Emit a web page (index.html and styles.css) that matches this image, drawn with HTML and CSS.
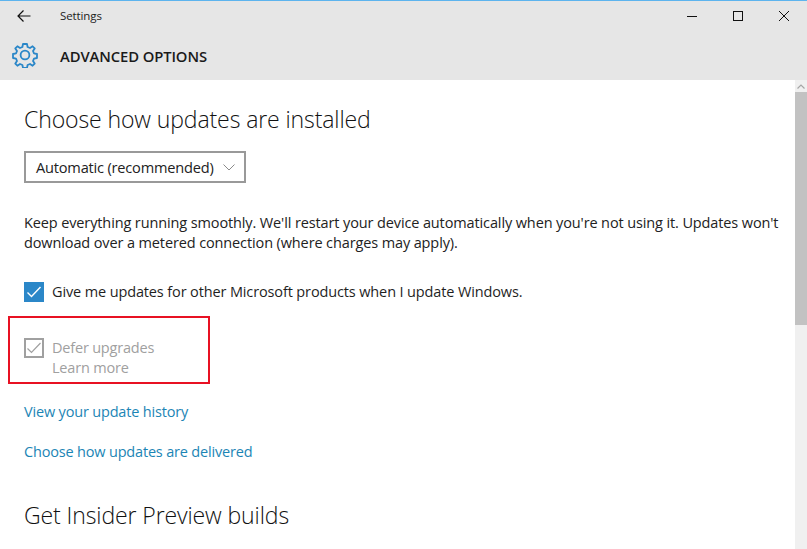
FILE: index.html
```html
<!DOCTYPE html>
<html lang="en">
<head>
<meta charset="utf-8">
<title>Settings</title>
<link rel="stylesheet" href="styles.css">
</head>
<body>
<div class="window">
  <header class="chrome">
    <div class="titlebar">
      <svg class="back" width="16" height="14" viewBox="0 0 16 14"><path d="M7.500 1.500 2 7 7.500 12.500M2 7H14.500" fill="none" stroke="#111" stroke-width="1.200"/></svg>
      <span class="app-title">Settings</span>
      <div class="controls">
        <svg width="12" height="12" viewBox="0 0 12 12"><path d="M1 6.500H11" stroke="#111" stroke-width="1"/></svg>
        <svg width="12" height="12" viewBox="0 0 12 12"><rect x="1.500" y="1.500" width="9" height="9" fill="none" stroke="#111" stroke-width="1"/></svg>
        <svg width="12" height="12" viewBox="0 0 12 12"><path d="M1 1 11 11M11 1 1 11" stroke="#111" stroke-width="1"/></svg>
      </div>
    </div>
    <div class="pagebar">
      <svg class="gear" width="26" height="26" viewBox="0 0 26 26"><g fill="none" stroke="#2b87c8" stroke-width="1.800" stroke-linejoin="round"><path d="M11 2h4l.6 3 2.400 1 2.600-1.700 2.100 2.100-1.700 2.600 1 2.400 3 .6v4l-3 .6-1 2.400 1.700 2.600-2.100 2.100-2.600-1.700-2.400 1-.6 3h-4l-.6-3-2.400-1-2.600 1.700-2.100-2.100 1.700-2.600-1-2.400-3-.6v-4l3-.6 1-2.400-1.700-2.600 2.100-2.100 2.600 1.700 2.400-1z"/><circle cx="13" cy="13" r="4.400"/></g></svg>
      <h1 class="page-title">ADVANCED OPTIONS</h1>
    </div>
  </header>
  <div class="body">
    <main class="content">
      <h2 class="section-title first">Choose how updates are installed</h2>
      <div class="select">
        <span>Automatic (recommended)</span>
        <svg width="12" height="7" viewBox="0 0 12 7"><path d="M.5.5 6 6 11.500.5" fill="none" stroke="#8a8a8a" stroke-width="1"/></svg>
      </div>
      <p class="desc">Keep everything running smoothly. We'll restart your device automatically when you're not using it. Updates won't download over a metered connection (where charges may apply).</p>
      <div class="check-row">
        <span class="box on"><svg width="20" height="20" viewBox="0 0 20 20"><path d="M3.500 10.500 7.500 14.500 16.500 5" fill="none" stroke="#fff" stroke-width="1.400"/></svg></span>
        <span class="label">Give me updates for other Microsoft products when I update Windows.</span>
      </div>
      <div class="highlight">
        <div class="check-row disabled">
          <span class="box off"><svg width="16" height="16" viewBox="0 0 16 16"><path d="M1.500 8.500 5.500 12.500 14.500 3" fill="none" stroke="#a0a0a0" stroke-width="1.200"/></svg></span>
          <div class="stack">
            <span class="label">Defer upgrades</span>
            <span class="label">Learn more</span>
          </div>
        </div>
      </div>
      <a class="link first-link">View your update history</a>
      <a class="link">Choose how updates are delivered</a>
      <h2 class="section-title">Get Insider Preview builds</h2>
    </main>
    <div class="scrollbar">
      <div class="arrow"><svg width="8" height="5" viewBox="0 0 8 5"><path d="M.5 4.500 4 1 7.500 4.500" fill="none" stroke="#a6a6a6" stroke-width="1.200"/></svg></div>
      <div class="thumb"></div>
    </div>
  </div>
</div>
</body>
</html>
```
FILE: styles.css
```css
* { box-sizing: border-box; }
html, body { margin: 0; height: 100%; }
body { font-family: "Open Sans", "Noto Sans", sans-serif; background: #fff; color: #1f1f1f; overflow: hidden; }
.window { width: 807px; height: 549px; display: flex; flex-direction: column; overflow: hidden; }
.chrome { background: #e6e6e6; border-top: 1px solid #5db4ee; height: 80px; flex: none; }
.titlebar { height: 29px; display: flex; align-items: center; padding-left: 16px; }
.back { flex: none; }
.app-title { font-size: 11.5px; margin-left: 28px; color: #222; letter-spacing: -.1px; }
.controls { margin-left: auto; display: flex; gap: 34px; padding-right: 17px; }
.pagebar { height: 50px; display: flex; align-items: center; padding-left: 11.5px; }
.gear { flex: none; }
.page-title { font-size: 14.8px; font-weight: 600; margin: 0 0 0 22.5px; padding-top: 2px; color: #1a1a1a; letter-spacing: -.1px; }
.body { flex: 1; display: flex; min-height: 0; }
.content { flex: 1; padding-left: 24px; min-width: 0; }
.section-title { font-size: 23.05px; font-weight: 300; margin: 38px 0 0; line-height: 30px; color: #111; letter-spacing: -.12px; }
.section-title.first { margin-top: 24px; }
.select { margin-top: 17px; width: 222px; height: 32px; border: 2px solid #999; display: flex; align-items: center; justify-content: space-between; padding: 0 9px 0 10px; font-size: 14.6px; letter-spacing: -.2px; color: #222; }
.desc { margin: 30px 0 0; width: 765px; font-size: 14.5px; line-height: 20px; letter-spacing: -.12px; color: #222; }
.check-row { display: flex; align-items: flex-start; gap: 8px; font-size: 14.5px; letter-spacing: -.13px; line-height: 20px; }
.desc + .check-row { margin-top: 29px; }
.box { width: 20px; height: 20px; flex: none; display: flex; align-items: center; justify-content: center; }
.box.on { background: #2b87c8; }
.box.off { border: 2px solid #a0a0a0; }
.stack { display: flex; flex-direction: column; }
.disabled { color: #a0a0a0; letter-spacing: -.2px; }
.highlight { width: 202px; height: 68px; margin: 14px 0 0 -16px; border: 2px solid #e81123; padding: 20px 0 0 14px; }
.link { display: block; font-size: 14.5px; letter-spacing: -.18px; line-height: 20px; color: #1c85b5; margin-top: 20px; }
.first-link { margin-top: 18px; }
.scrollbar { width: 12px; flex: none; background: #f0f0f0; display: flex; flex-direction: column; }
.arrow { height: 12px; display: flex; align-items: center; justify-content: center; }
.thumb { height: 233px; background: #c2c2c2; }
```
